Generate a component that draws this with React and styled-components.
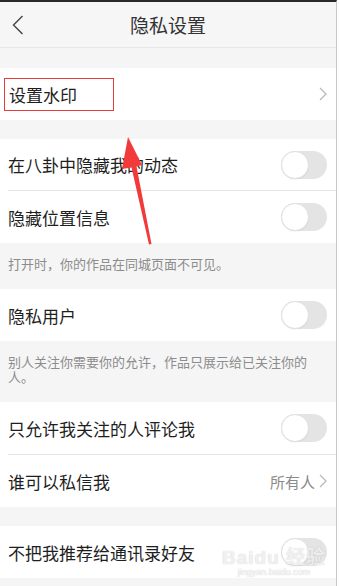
import styled, { createGlobalStyle } from "styled-components";

const GlobalStyle = createGlobalStyle`
  html, body {
    margin: 0;
    padding: 0;
    background: #ffffff;
  }
  * {
    box-sizing: border-box;
  }
`;

const Screen = styled.div`
  position: relative;
  width: 337px;
  height: 586px;
  overflow: hidden;
  background: #f5f5f5;
  border-top: 2px solid #2a2a2a;
  border-right: 1px solid #c8c8c8;
  font-family: "Noto Sans CJK SC", "Noto Sans", sans-serif;
`;

const Header = styled.div`
  display: flex;
  align-items: center;
  justify-content: center;
  position: relative;
  height: 46px;
  background: #f6f6f6;
  border-bottom: 1px solid #e6e6e6;
  color: #333333;
  font-size: 19px;
`;

const Back = styled.svg`
  position: absolute;
  left: 12px;
  top: 13px;
`;

const Gap = styled.div`
  height: ${(p) => p.$h}px;
`;

const Group = styled.div`
  background: #ffffff;
`;

const Row = styled.div`
  display: flex;
  align-items: center;
  justify-content: space-between;
  height: ${(p) => p.$h || 52}px;
  padding: 0 9px 0 8px;
  color: #1e1e1e;
  font-size: 17px;
`;

const Label = styled.span`
  display: inline-block;
  ${(p) =>
    p.$boxed &&
    `
    margin-left: -4px;
    padding: 3px 36px 3px 4px;
    border: 1px solid #e63b3b;
  `}
`;

const Divider = styled.div`
  height: 1px;
  margin-left: 8px;
  background: #e6e6e6;
`;

const Value = styled.span`
  display: flex;
  align-items: center;
  gap: 4px;
  color: #8a8a8a;
  font-size: 15px;
`;

const Track = styled.div`
  position: relative;
  width: 46px;
  height: 28px;
  border-radius: 14px;
  background: #e4e4e4;
`;

const Knob = styled.div`
  position: absolute;
  left: 0;
  top: 0;
  width: 28px;
  height: 28px;
  border-radius: 50%;
  background: #ffffff;
  border: 1px solid #e0e0e0;
  box-shadow: 0 1px 1px rgba(0, 0, 0, 0.04);
`;

const Note = styled.div`
  height: ${(p) => p.$h}px;
  padding: ${(p) => p.$pt}px 26px 0 8px;
  color: #8c8c8c;
  font-size: 13px;
  line-height: 15px;
`;

const Pointer = styled.svg`
  position: absolute;
  left: 112px;
  top: 130px;
  pointer-events: none;
`;

const Watermark = styled.div`
  position: absolute;
  left: 222px;
  top: 540px;
  display: flex;
  flex-direction: column;
  align-items: center;
  color: rgba(255, 255, 255, 0.75);
  text-shadow: 0 0 1px rgba(120, 120, 120, 0.45);
  font-family: "Liberation Sans", "Noto Sans CJK SC", sans-serif;
  pointer-events: none;

  b {
    font-size: 19px;
    font-weight: 700;
    letter-spacing: 1px;
  }
  small {
    font-size: 9px;
    margin-top: -2px;
  }
`;

function Chevron() {
  return (
    <svg width="8" height="14" viewBox="0 0 8 14">
      <path d="M1 1 L7 7 L1 13" fill="none" stroke="#b8b8b8" strokeWidth="1.2" />
    </svg>
  );
}

function Switch() {
  return (
    <Track>
      <Knob />
    </Track>
  );
}

export default function App() {
  return (
    <>
      <GlobalStyle />
      <Screen>
        <Header>
          <Back width="12" height="20" viewBox="0 0 12 20">
            <path d="M10.5 1 L1.5 10 L10.5 19" fill="none" stroke="#444" strokeWidth="1.4" />
          </Back>
          隐私设置
        </Header>
        <Gap $h={20} />
        <Group>
          <Row>
            <Label $boxed>设置水印</Label>
            <Chevron />
          </Row>
        </Group>
        <Gap $h={19} />
        <Group>
          <Row $h={51}>
            <Label>在八卦中隐藏我的动态</Label>
            <Switch />
          </Row>
          <Divider />
          <Row>
            <Label>隐藏位置信息</Label>
            <Switch />
          </Row>
        </Group>
        <Note $h={46} $pt={13}>打开时，你的作品在同城页面不可见。</Note>
        <Group>
          <Row>
            <Label>隐私用户</Label>
            <Switch />
          </Row>
        </Group>
        <Note $h={61} $pt={13}>别人关注你需要你的允许，作品只展示给已关注你的人。</Note>
        <Group>
          <Row>
            <Label>只允许我关注的人评论我</Label>
            <Switch />
          </Row>
          <Divider />
          <Row>
            <Label>谁可以私信我</Label>
            <Value>
              所有人
              <Chevron />
            </Value>
          </Row>
        </Group>
        <Gap $h={19} />
        <Group>
          <Row>
            <Label>不把我推荐给通讯录好友</Label>
            <Switch />
          </Row>
        </Group>

        <Pointer width="44" height="118" viewBox="0 0 44 118">
          <polygon
            points="16,5 30,33 24.5,34.5 39.5,112 37,112.5 19.5,35.5 10,37"
            fill="#f23a3a"
          />
        </Pointer>

        <Watermark>
          <b>Baidu 经验</b>
          <small>jingyan.baidu.com</small>
        </Watermark>
      </Screen>
    </>
  );
}
